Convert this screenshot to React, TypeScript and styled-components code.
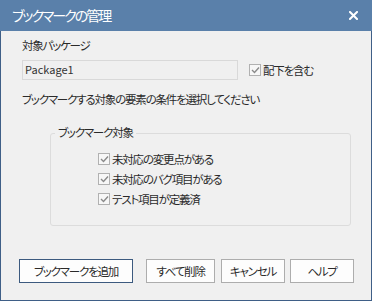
import React from "react";
import styled, { createGlobalStyle } from "styled-components";

const Global = createGlobalStyle`
  html, body { margin: 0; padding: 0; background: #f0f0f0; }
  * { box-sizing: border-box; }
`;

const FONT = `"Noto Sans CJK JP", "Noto Sans", sans-serif`;

const Window = styled.div`
  width: 372px;
  height: 301px;
  border: 1px solid #3f5f87;
  border-top: none;
  background: #f0f0f0;
  display: flex;
  flex-direction: column;
  font-family: ${FONT};
  font-feature-settings: "palt";
  color: #2a2a2a;
  font-size: 11.5px;
  letter-spacing: -1.2px;
`;

const TitleBar = styled.div`
  height: 31px;
  flex: none;
  margin: 0 -1px;
  background: #5a80aa;
  display: flex;
  align-items: center;
  justify-content: space-between;
  padding: 0 14px 0 12px;
`;

const Title = styled.span`
  color: #ffffff;
  font-size: 14px;
  letter-spacing: -2px;
  line-height: 20px;
  margin-top: -1px;
`;

const Body = styled.div`
  flex: 1;
  display: flex;
  flex-direction: column;
  padding: 0 0 0 21px;
`;

const Label = styled.div<{ $top: number }>`
  margin-top: ${(p) => p.$top}px;
  line-height: 16px;
  height: 16px;
  white-space: nowrap;
`;

const PackageRow = styled.div`
  margin-top: 7px;
  display: flex;
  align-items: center;
  height: 20px;
`;

const TextBox = styled.div`
  width: 216px;
  height: 20px;
  border: 1px solid #d9d9d9;
  background: #f0f0f0;
  padding: 0 2px;
  line-height: 17px;
  font-size: 11px;
  letter-spacing: 0;
  color: #333;
`;

const CheckRow = styled.label<{ $left?: number }>`
  display: flex;
  align-items: center;
  height: 20px;
  margin-left: ${(p) => p.$left ?? 0}px;
  white-space: nowrap;
`;

const Box = styled.span`
  width: 12px;
  height: 12px;
  border: 1px solid #b1b1b1;
  background: #f7f7f7;
  display: inline-flex;
  align-items: center;
  justify-content: center;
  margin-right: 2px;
  flex: none;
`;

const Group = styled.div`
  position: relative;
  margin-top: 26px;
  margin-left: 28px;
  width: 301px;
  height: 93px;
  border: 1px solid #dcdcdc;
  border-radius: 3px;
  padding: 15px 0 16px 47px;
  display: flex;
  flex-direction: column;
`;

const Legend = styled.span`
  position: absolute;
  top: -10px;
  left: 4px;
  padding: 0 3px;
  background: #f0f0f0;
  line-height: 16px;
`;

const ButtonRow = styled.div`
  margin-top: 33px;
  margin-left: -3px;
  display: flex;
  align-items: center;
`;

const Button = styled.button<{ $w: number; $gap: number; $default?: boolean }>`
  width: ${(p) => p.$w}px;
  height: 24px;
  margin-left: ${(p) => p.$gap}px;
  border: 1px solid ${(p) => (p.$default ? "#3c5a7f" : "#adadad")};
  background: #fdfdfd;
  font-family: ${FONT};
  font-feature-settings: "palt";
  font-size: 11.5px;
  letter-spacing: -1.2px;
  color: #2a2a2a;
  padding: 0;
  line-height: 20px;
  border-radius: 0;
`;

const Check = () => (
  <Box>
    <svg width="9" height="8" viewBox="0 0 9 8">
      <path d="M1 4 L3.5 6.5 L8 1.5" fill="none" stroke="#8a8a8a" strokeWidth="1.4" />
    </svg>
  </Box>
);

const CloseIcon = () => (
  <svg width="9" height="9" viewBox="0 0 9 9">
    <path d="M1 1 L8 8 M8 1 L1 8" stroke="#ffffff" strokeWidth="2" strokeLinecap="square" />
  </svg>
);

export default function App() {
  return (
    <>
      <Global />
      <Window>
        <TitleBar>
          <Title>ブックマークの管理</Title>
          <CloseIcon />
        </TitleBar>
        <Body>
          <Label $top={6}>対象パッケージ</Label>
          <PackageRow>
            <TextBox>Package1</TextBox>
            <CheckRow $left={11}>
              <Check />
              配下を含む
            </CheckRow>
          </PackageRow>
          <Label $top={11}>ブックマークする対象の要素の条件を選択してください</Label>
          <Group>
            <Legend>ブックマーク対象</Legend>
            <CheckRow>
              <Check />
              未対応の変更点がある
            </CheckRow>
            <CheckRow>
              <Check />
              未対応のバグ項目がある
            </CheckRow>
            <CheckRow>
              <Check />
              テスト項目が定義済
            </CheckRow>
          </Group>
          <ButtonRow>
            <Button $w={114} $gap={0} $default>ブックマークを追加</Button>
            <Button $w={69} $gap={13}>すべて削除</Button>
            <Button $w={64} $gap={6}>キャンセル</Button>
            <Button $w={64} $gap={5}>ヘルプ</Button>
          </ButtonRow>
        </Body>
      </Window>
    </>
  );
}
